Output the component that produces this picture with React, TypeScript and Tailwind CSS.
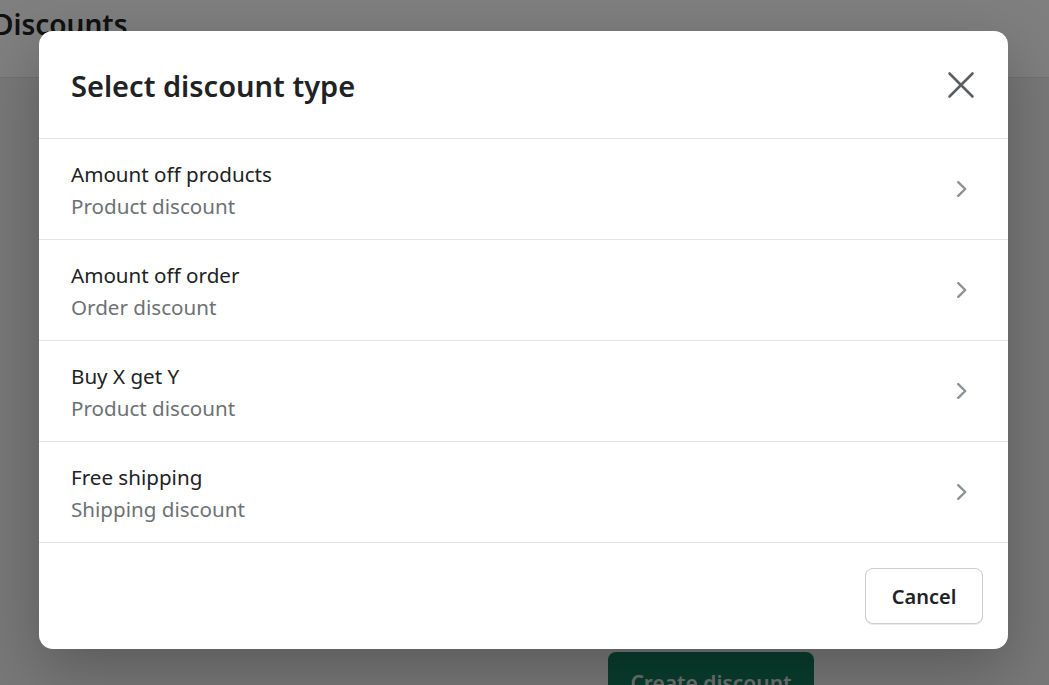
const discountTypes = [
  { title: 'Amount off products', subtitle: 'Product discount' },
  { title: 'Amount off order', subtitle: 'Order discount' },
  { title: 'Buy X get Y', subtitle: 'Product discount' },
  { title: 'Free shipping', subtitle: 'Shipping discount' },
];

function Chevron() {
  return (
    <svg width="12" height="18" viewBox="0 0 12 18" fill="none" className="text-[#8c9196]">
      <path d="M2.2 2.2 9.2 9l-7 6.8" stroke="currentColor" strokeWidth="2.4" strokeLinecap="round" strokeLinejoin="round" />
    </svg>
  );
}

function CloseIcon() {
  return (
    <svg width="28" height="28" viewBox="0 0 28 28" fill="none" className="text-[#5c5f62]">
      <path d="M2.5 2.5 25.5 25.5M25.5 2.5 2.5 25.5" stroke="currentColor" strokeWidth="2.6" strokeLinecap="round" />
    </svg>
  );
}

function DiscountTypeRow({ title, subtitle }: { title: string; subtitle: string }) {
  return (
    <button className="flex h-[101px] w-full items-center justify-between border-b border-[#e3e3e3] pl-8 pr-[40px] text-left">
      <div className="flex flex-col pt-[1px]">
        <span className="text-[20.6px] leading-[32px] text-[#202223]">{title}</span>
        <span className="text-[20.6px] leading-[32px] text-[#6d7175]">{subtitle}</span>
      </div>
      <Chevron />
    </button>
  );
}

export default function App() {
  return (
    <div className="relative h-[685px] w-[1049px] overflow-hidden bg-[#f1f1f1] font-['Noto_Sans',sans-serif]">
      {/* page behind the dialog */}
      <header className="flex h-[78px] items-start border-b border-[#e1e3e5] bg-white">
        <h1 className="-ml-[7px] mt-[3px] text-[28px] font-semibold text-[#202223]">Discounts</h1>
      </header>
      <div className="flex pl-[608px] pt-[574px]">
        <button className="h-[56px] w-[206px] rounded-lg bg-[#127a5c] pt-2 text-[21px] font-semibold text-[#d8e2de]">
          Create discount
        </button>
      </div>

      {/* backdrop */}
      <div className="absolute inset-0 bg-black/50" />

      {/* dialog */}
      <div className="absolute left-[39px] top-[31px] w-[969px] overflow-hidden rounded-[14px] bg-white shadow-[0_20px_60px_rgba(0,0,0,0.25)]">
        <div className="flex h-[108px] items-center justify-between border-b border-[#e3e3e3] pl-8 pr-[33px]">
          <h2 className="pt-[2px] text-[29px] font-semibold text-[#202223]">Select discount type</h2>
          <CloseIcon />
        </div>
        {discountTypes.map((t) => (
          <DiscountTypeRow key={t.title} title={t.title} subtitle={t.subtitle} />
        ))}
        <div className="flex h-[106px] items-center justify-end pr-[25px]">
          <button className="h-[56px] w-[118px] rounded-lg border border-[#c9cccf] bg-white pt-[2px] text-[20px] font-semibold text-[#202223] shadow-[0_1px_0_rgba(0,0,0,0.08)]">
            Cancel
          </button>
        </div>
      </div>
    </div>
  );
}
